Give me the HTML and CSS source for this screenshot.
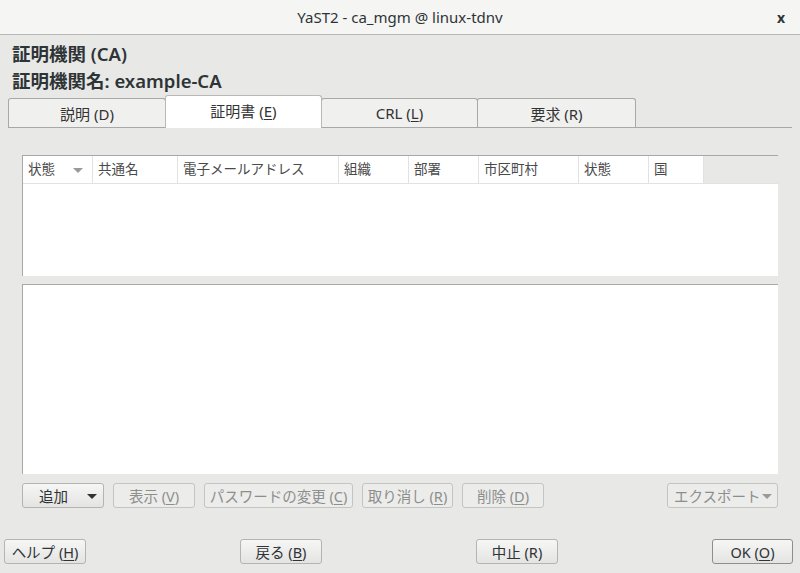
FILE: index.html
```html
<!DOCTYPE html>
<html lang="ja">
<head>
<meta charset="utf-8">
<title>YaST2 - ca_mgm @ linux-tdnv</title>
<link rel="stylesheet" href="styles.css">
</head>
<body>
<div class="window">
  <header class="titlebar">
    <span class="title">YaST2 - ca_mgm @ linux-tdnv</span>
    <span class="close">x</span>
  </header>
  <div class="headings">
    <div class="h1">証明機関 (CA)</div>
    <div class="h1">証明機関名: example-CA</div>
  </div>
  <div class="tabbar">
    <div class="tab t1">説明 (D)</div>
    <div class="tab t2 active">証明書 (<u>E</u>)</div>
    <div class="tab t3">CRL (<u>L</u>)</div>
    <div class="tab t4">要求 (R)</div>
  </div>
  <div class="panel">
    <div class="table">
      <div class="thead">
        <div class="th c1">状態 <span class="sort"></span></div>
        <div class="th c2">共通名</div>
        <div class="th c3">電子メールアドレス</div>
        <div class="th c4">組織</div>
        <div class="th c5">部署</div>
        <div class="th c6">市区町村</div>
        <div class="th c7">状態</div>
        <div class="th c8">国</div>
        <div class="th-fill"></div>
      </div>
      <div class="tbody"></div>
    </div>
    <div class="details"></div>
    <div class="actions">
      <button class="btn btn-add">追加<span class="caret"></span></button>
      <button class="btn dis w82">表示 (<u>V</u>)</button>
      <button class="btn dis w149">パスワードの変更 (<u>C</u>)</button>
      <button class="btn dis w91">取り消し (<u>R</u>)</button>
      <button class="btn dis w82">削除 (<u>D</u>)</button>
      <span class="spacer"></span>
      <button class="btn dis btn-export">エクスポート<span class="caret light"></span></button>
    </div>
  </div>
  <div class="footer">
    <button class="btn fbtn">ヘルプ (<u>H</u>)</button>
    <button class="btn fbtn">戻る (<u>B</u>)</button>
    <button class="btn fbtn">中止 (R)</button>
    <button class="btn fbtn ok">OK (<u>O</u>)</button>
  </div>
</div>
</body>
</html>
```
FILE: styles.css
```css
* { box-sizing: border-box; }
html, body {
  margin: 0;
  padding: 0;
  width: 800px;
  height: 573px;
  overflow: hidden;
  background: #e8e8e7;
  font-family: "Noto Sans", "Noto Sans CJK JP", sans-serif;
  color: #2e3436;
}
.window { width: 800px; height: 573px; }
.titlebar {
  height: 35px;
  background: #f5f5f4;
  border-bottom: 1px solid #b8b8b6;
  display: flex;
  align-items: center;
  justify-content: center;
  position: relative;
}
.title {
  font-size: 15px;
  color: #2e3436;
}
.close {
  position: absolute;
  right: 15px;
  top: 8px;
  font-size: 14px;
  font-weight: bold;
  color: #2e3436;
}
.headings { padding: 5px 0 0 12px; }
.h1 {
  font-size: 18.5px;
  font-weight: 600;
  line-height: 28px;
  height: 27px;
  color: #2e3436;
}
.tabbar {
  margin: 1px 8px 0 8px;
  height: 33px;
  display: flex;
  align-items: flex-end;
  border-bottom: 1px solid #a8a8a6;
}
.tab {
  height: 29px;
  border: 1px solid #a8a8a6;
  border-bottom: none;
  border-radius: 3px 3px 0 0;
  background: #f0f0ef;
  font-size: 15px;
  color: #333;
  display: flex;
  align-items: center;
  justify-content: center;
  margin-right: -1px;
}
.tab.active {
  height: 33px;
  background: #ffffff;
  margin-bottom: -1px;
  padding-bottom: 3px;
  border-color: #b8b8b6;
  position: relative;
  z-index: 1;
}
.t1 { width: 158px; }
.t2 { width: 157px; }
.t3 { width: 157px; }
.t4 { width: 159px; }
u { text-decoration: underline; text-underline-offset: 2px; }
.panel { padding: 27px 22px 0 22px; }
.table {
  height: 121px;
  border-top: 1px solid #a8a8a6;
  border-left: 1px solid #a8a8a6;
  background: #fff;
  display: flex;
  flex-direction: column;
}
.thead {
  height: 28px;
  display: flex;
  border-bottom: 1px solid #e2e2e2;
}
.th {
  font-size: 13.5px;
  color: #4a4a4a;
  padding-left: 5px;
  line-height: 27px;
  border-right: 1px solid #e2e2e2;
  white-space: nowrap;
  position: relative;
  background: #fff;
}
.th-fill { flex: 1; background: #e8e8e7; }
.c1 { width: 70px; }
.c2 { width: 85px; }
.c3 { width: 161px; }
.c4 { width: 70px; }
.c5 { width: 70px; }
.c6 { width: 100px; }
.c7 { width: 70px; }
.c8 { width: 55px; }
.sort {
  position: absolute;
  left: 50px;
  top: 12px;
  width: 0; height: 0;
  border-left: 5px solid transparent;
  border-right: 5px solid transparent;
  border-top: 5px solid #9a9a9a;
}
.tbody { flex: 1; background: #fff; }
.details {
  margin-top: 8px;
  height: 190px;
  border-top: 1px solid #a8a8a6;
  border-left: 1px solid #a8a8a6;
  background: #fff;
}
.actions {
  margin-top: 9px;
  display: flex;
  gap: 9px;
  height: 25px;
}
.spacer { flex: 1; }
.btn {
  height: 25px;
  border: 1px solid #b4b4b2;
  border-radius: 3px;
  background: linear-gradient(#f6f6f5, #e4e4e3);
  font-family: "Noto Sans", "Noto Sans CJK JP", sans-serif;
  font-size: 14.5px;
  color: #2e3436;
  padding: 0;
  display: flex;
  align-items: center;
  justify-content: center;
  white-space: nowrap;
}
.btn.dis {
  background: #ececeb;
  border-color: #c4c4c2;
  color: #8d8f8d;
}
.w82 { width: 82px; }
.w149 { width: 149px; }
.w91 { width: 91px; }
.btn-add { width: 82px; justify-content: flex-start; padding-left: 16px; position: relative; }
.btn-export { width: 111px; justify-content: flex-start; padding-left: 6px; position: relative; }
.caret {
  position: absolute;
  right: 6px;
  top: 10px;
  width: 0; height: 0;
  border-left: 5px solid transparent;
  border-right: 5px solid transparent;
  border-top: 5px solid #2e3436;
}
.caret.light { border-top-color: #9a9a9a; right: 5px; }
.footer {
  margin-top: 31px;
  padding: 0 7px 0 4px;
  display: flex;
  justify-content: space-between;
}
.fbtn { width: 82px; height: 25px; }
.ok { border-color: #8e8e8c; width: 81px; }
```
